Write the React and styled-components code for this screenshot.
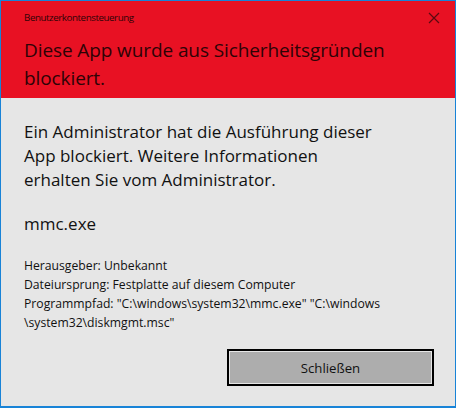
import React from 'react'
import styled, { createGlobalStyle } from 'styled-components'

const Global = createGlobalStyle`
  html, body {
    margin: 0;
    padding: 0;
    background: #e6e6e6;
  }
  * { box-sizing: border-box; }
`

const Window = styled.div`
  width: 456px;
  height: 408px;
  border: 1px solid #1883d7;
  border-bottom-width: 2px;
  background: #e6e6e6;
  display: flex;
  flex-direction: column;
  font-family: "Open Sans", "Noto Sans", sans-serif;
  overflow: hidden;
`

const Header = styled.div`
  background: #e81123;
  color: #2e0306;
  height: 97px;
  display: flex;
  flex-direction: column;
`

const TitleBar = styled.div`
  display: flex;
  align-items: center;
  justify-content: space-between;
  height: 33px;
  padding: 0 14px 0 23px;
`

const Caption = styled.span`
  font-size: 9.8px;
  letter-spacing: -0.45px;
`

const Close = styled.div`
  width: 14px;
  height: 14px;
  display: flex;
  align-items: center;
  justify-content: center;
`

const Heading = styled.div`
  padding: 2px 20px 0 23px;
  font-size: 19px;
  line-height: 28px;
  letter-spacing: -0.1px;
`

const Body = styled.div`
  flex: 1;
  display: flex;
  flex-direction: column;
  padding: 22px 20px 0 23px;
  color: #111;
`

const Message = styled.p`
  margin: 0;
  font-size: 17px;
  line-height: 24px;
`

const AppName = styled(Message)`
  margin-top: 20px;
`

const Details = styled.div`
  margin-top: 20px;
  font-size: 12.2px;
  line-height: 19px;
`

const Footer = styled.div`
  display: flex;
  justify-content: flex-end;
  margin-top: 17px;
  padding-right: 1px;
`

const Button = styled.button`
  width: 207px;
  height: 37px;
  border: 2px solid #000;
  box-shadow: inset 0 0 0 1px #e6e6e6;
  background: #adadad;
  font-family: inherit;
  font-size: 13.2px;
  color: #111;
  padding: 0;
`

export default function App() {
  return (
    <>
      <Global />
      <Window>
        <Header>
          <TitleBar>
            <Caption>Benutzerkontensteuerung</Caption>
            <Close>
              <svg width="12" height="12" viewBox="0 0 12 12">
                <path d="M1 1 L11 11 M11 1 L1 11" stroke="#5a0a10" strokeWidth="1.2" />
              </svg>
            </Close>
          </TitleBar>
          <Heading>
            Diese App wurde aus Sicherheitsgründen
            <br />
            blockiert.
          </Heading>
        </Header>
        <Body>
          <Message>
            Ein Administrator hat die Ausführung dieser
            <br />
            App blockiert. Weitere Informationen
            <br />
            erhalten Sie vom Administrator.
          </Message>
          <AppName>mmc.exe</AppName>
          <Details>
            <div>Herausgeber: Unbekannt</div>
            <div>Dateiursprung: Festplatte auf diesem Computer</div>
            <div>Programmpfad: "C:\windows\system32\mmc.exe" "C:\windows</div>
            <div>\system32\diskmgmt.msc"</div>
          </Details>
          <Footer>
            <Button>Schließen</Button>
          </Footer>
        </Body>
      </Window>
    </>
  )
}
